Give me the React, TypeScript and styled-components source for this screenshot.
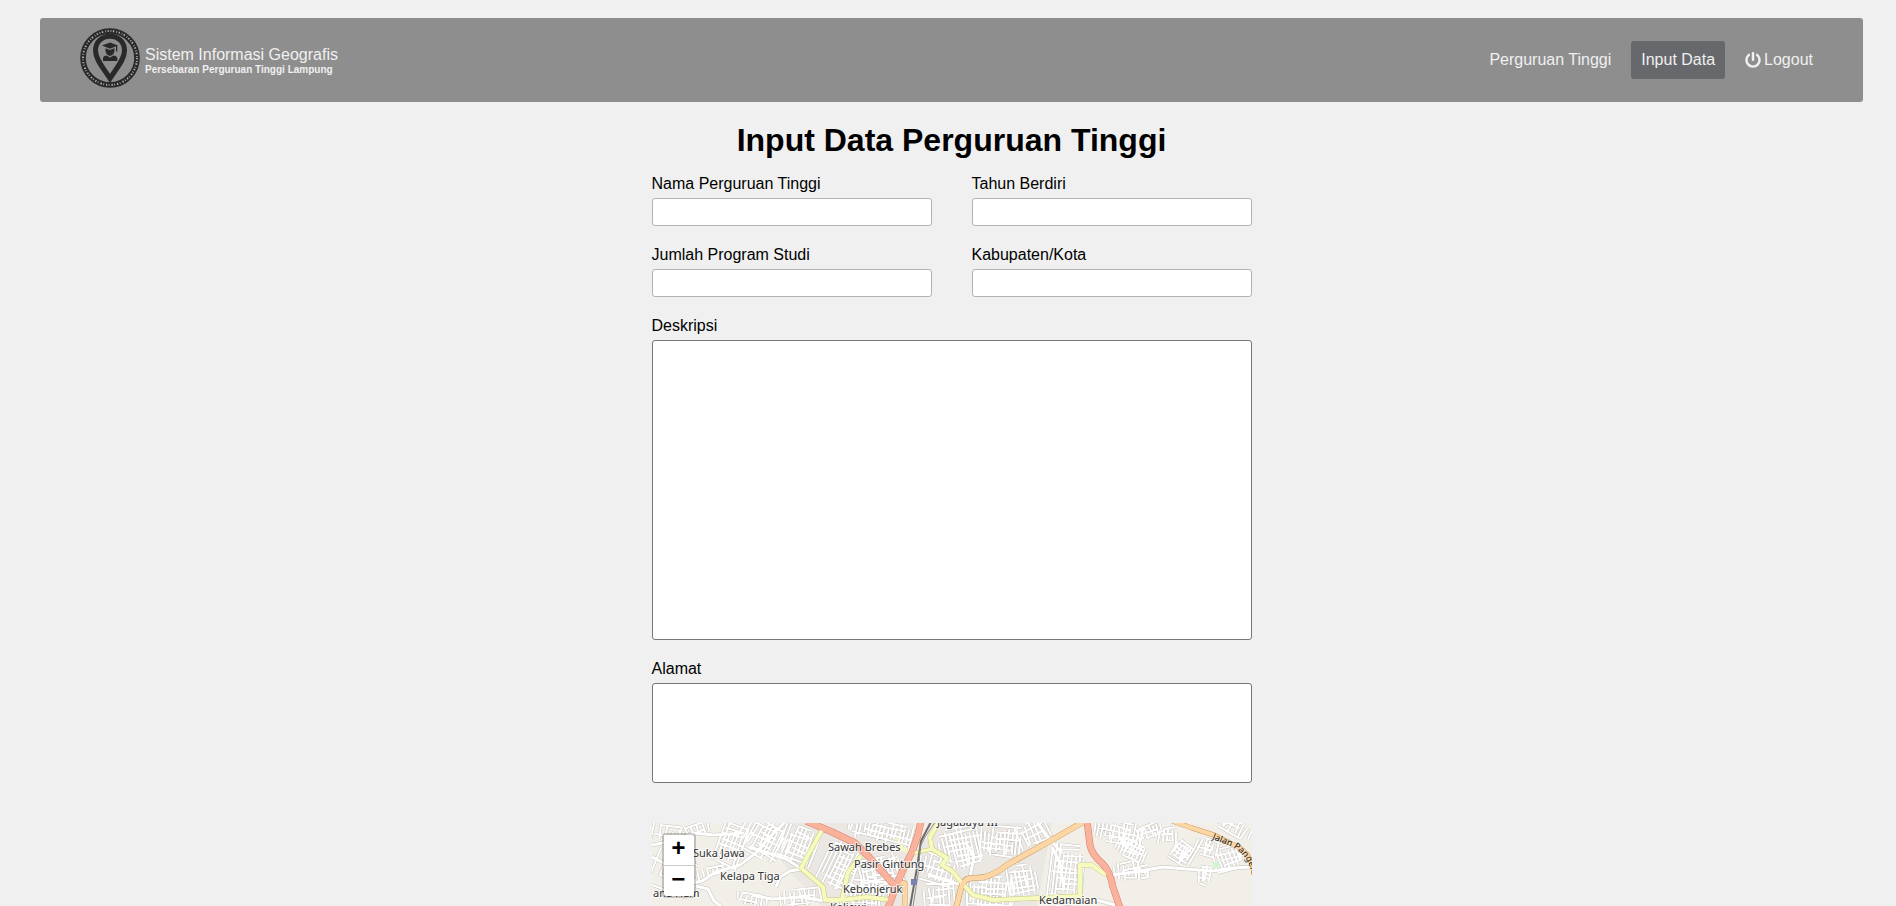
import React from 'react';
import styled, { createGlobalStyle } from 'styled-components';
import { FaPowerOff } from 'react-icons/fa';

const GlobalStyle = createGlobalStyle`
  *, *::before, *::after { box-sizing: border-box; }
  body {
    margin: 0;
    background: #f0f0f0;
    color: #000;
    font-family: Arial, 'Liberation Sans', sans-serif;
    font-size: 16px;
    line-height: 18px;
  }
`;

const Page = styled.div`
  display: flex;
  flex-direction: column;
  height: 100vh;
  padding: 18px 33px 0 40px;
  overflow: hidden;
`;

const Header = styled.header`
  display: flex;
  align-items: center;
  justify-content: space-between;
  flex: none;
  padding: 10px 40px;
  border-radius: 3px;
  background: #8e8e8e;
  color: #f0f0f0;
`;

const Brand = styled.a`
  display: flex;
  align-items: center;
  gap: 5px;
  padding-bottom: 4px;
  color: inherit;
  text-decoration: none;
`;

const BrandText = styled.span`
  display: flex;
  flex-direction: column;
  padding-top: 6px;
`;

const BrandName = styled.span`
  line-height: 18px;
`;

const BrandTagline = styled.strong`
  font-size: 10px;
  line-height: 12px;
`;

const Nav = styled.nav`
  display: flex;
  gap: 10px;
`;

const NavLink = styled.a<{ $active?: boolean }>`
  display: flex;
  align-items: center;
  gap: 3px;
  padding: 10px;
  border-radius: 3px;
  background: ${(p) => (p.$active ? '#67686c' : 'transparent')};
  color: inherit;
  text-decoration: none;
`;

const Main = styled.main`
  display: flex;
  flex: 1;
  flex-direction: column;
  align-items: center;
  padding-top: 20px;
`;

const Title = styled.h1`
  margin: 0 0 16px;
  font-size: 32px;
  line-height: 37px;
`;

const Form = styled.form`
  display: flex;
  flex: 1;
  flex-direction: column;
  gap: 20px;
  width: 100%;
  max-width: 600px;
`;

const FieldGrid = styled.div`
  display: grid;
  grid-template-columns: 1fr 1fr;
  gap: 20px 40px;
`;

const Field = styled.div`
  display: flex;
  flex-direction: column;
  gap: 5px;
`;

const TextInput = styled.input`
  width: 100%;
  height: 28px;
  padding: 5px;
  border: 1px solid #b2b2b2;
  border-radius: 3px;
  background: #fff;
  font: inherit;
`;

const TextArea = styled.textarea<{ $height: number }>`
  display: block;
  width: 100%;
  height: ${(p) => p.$height}px;
  padding: 5px;
  border: 1px solid #767676;
  border-radius: 3px;
  background: #fff;
  font: inherit;
  resize: none;
`;

const MapFrame = styled.div`
  position: relative;
  flex: 1;
  min-height: 80px;
  margin-top: 20px;
  overflow: hidden;
  background: #f2efe9;
`;

const MapDrawing = styled.svg`
  position: absolute;
  top: 0;
  left: 0;
  font-family: 'Noto Sans', sans-serif;
`;

const ZoomControl = styled.div`
  position: absolute;
  top: 10px;
  left: 10px;
  display: flex;
  flex-direction: column;
  border: 2px solid rgba(0, 0, 0, 0.2);
  border-radius: 4px;
  background-clip: padding-box;
`;

const ZoomButton = styled.button`
  width: 30px;
  height: 30px;
  padding: 0;
  border: 0;
  background: #fff;
  color: #000;
  font: bold 24px/30px 'Liberation Mono', monospace;
  cursor: pointer;

  &:first-child {
    height: 31px;
    border-bottom: 1px solid #ccc;
    border-radius: 2px 2px 0 0;
  }

  &:last-child {
    border-radius: 0 0 2px 2px;
  }
`;

function Logo() {
  return (
    <svg width="60" height="60" viewBox="0 0 60 60" aria-hidden="true">
      <circle cx="30" cy="30" r="27" fill="none" stroke="#292929" strokeWidth="5.6" />
      <circle
        cx="30"
        cy="30"
        r="27"
        fill="none"
        stroke="#b4b4b4"
        strokeWidth="2"
        strokeDasharray="1.2 1.9 0.8 1.5 1.4 2.2 0.7 1.6"
      />
      <path
        d="M30 8.200c-8.500 0-14.500 6.200-14.500 14.300 0 9.500 8.500 18 14.500 28 6-10 14.500-18.500 14.500-28C44.500 14.400 38.500 8.200 30 8.200Z"
        fill="none"
        stroke="#292929"
        strokeWidth="5"
      />
      <g fill="#292929">
        <path d="M30 14.500 38 17.600l-8 3.200-8-3.200Z" />
        <path d="M36 18h1.300v5.500H36Z" />
        <path d="M25.500 20.200l4.500 1.800 4.500-1.800v2c0 3-2 5.500-4.500 5.500s-4.500-2.500-4.500-5.500Z" />
        <path d="M23 33v-2.500c0-2 1.500-3 3.500-3l3.500 2 3.500-2c2 0 3.800 1 3.800 3V33Z" />
      </g>
    </svg>
  );
}

type District = {
  x: number;
  y: number;
  w: number;
  h: number;
  angle: number;
  step: number;
};

const districts: District[] = [
  { x: 0, y: 2, w: 34, h: 20, angle: 12, step: 7 },
  { x: 28, y: 0, w: 32, h: 14, angle: -20, step: 6 },
  { x: 0, y: 30, w: 44, h: 40, angle: 24, step: 9 },
  { x: 66, y: 0, w: 26, h: 46, angle: 20, step: 4 },
  { x: 90, y: -8, w: 44, h: 44, angle: 28, step: 4 },
  { x: 128, y: 2, w: 36, h: 40, angle: 22, step: 4 },
  { x: 46, y: 42, w: 28, h: 12, angle: -18, step: 5 },
  { x: 84, y: 70, w: 30, h: 14, angle: 15, step: 5 },
  { x: 128, y: 64, w: 40, h: 20, angle: -8, step: 5 },
  { x: 172, y: 16, w: 34, h: 52, angle: 24, step: 4 },
  { x: 196, y: -4, w: 64, h: 24, angle: 14, step: 4 },
  { x: 208, y: 32, w: 40, h: 32, angle: -14, step: 4 },
  { x: 192, y: 56, w: 44, h: 30, angle: 6, step: 4 },
  { x: 266, y: 30, w: 36, h: 30, angle: 18, step: 5 },
  { x: 272, y: 58, w: 32, h: 28, angle: -4, step: 5 },
  { x: 288, y: 2, w: 42, h: 44, angle: -12, step: 4 },
  { x: 328, y: 2, w: 42, h: 34, angle: 6, step: 4 },
  { x: 366, y: -4, w: 34, h: 28, angle: -24, step: 5 },
  { x: 314, y: 52, w: 48, h: 34, angle: 4, step: 4 },
  { x: 356, y: 40, w: 28, h: 36, angle: -8, step: 4 },
  { x: 398, y: 20, w: 34, h: 64, angle: 6, step: 4 },
  { x: 442, y: -4, w: 50, h: 26, angle: 12, step: 4 },
  { x: 464, y: 16, w: 30, h: 20, angle: 26, step: 3 },
  { x: 486, y: 0, w: 26, h: 16, angle: -20, step: 4 },
  { x: 462, y: 38, w: 26, h: 20, angle: -8, step: 5 },
  { x: 484, y: 42, w: 14, h: 16, angle: 0, step: 4 },
  { x: 508, y: 4, w: 16, h: 18, angle: 2, step: 4 },
  { x: 520, y: 18, w: 22, h: 24, angle: 34, step: 3 },
  { x: 544, y: 14, w: 22, h: 22, angle: 20, step: 4 },
  { x: 546, y: 42, w: 14, h: 20, angle: 8, step: 4 },
  { x: 562, y: 22, w: 30, h: 26, angle: -16, step: 4 },
  { x: 560, y: -6, w: 40, h: 16, angle: 30, step: 5 },
];

/* Small repeatable pseudo random generator, so that the streets stay put between renders. */
function createRandom(seed: number) {
  let state = seed;
  return () => {
    state = (state * 16807) % 2147483647;
    return state / 2147483647;
  };
}

function streetPath({ x, y, w, h, step }: District, seed: number) {
  const random = createRandom(seed * 7919 + 13);
  const parts: string[] = [];
  for (let dx = 0; dx <= w; dx += step) {
    const start = Math.round(random() * h * 0.3);
    const end = Math.round(h - random() * h * 0.3);
    parts.push(`M${x + dx} ${y + start}l${Math.round(random() * 4 - 2)} ${end - start}`);
  }
  for (let dy = 2; dy <= h; dy += step * 1.4) {
    const start = Math.round(random() * w * 0.4);
    const end = Math.round(w - random() * w * 0.3);
    parts.push(`M${x + start} ${y + dy}l${end - start} ${Math.round(random() * 4 - 2)}`);
  }
  return parts.join('');
}

const streets = districts.map((d, i) => ({
  d: streetPath(d, i + 1),
  transform: `rotate(${d.angle} ${d.x + d.w / 2} ${d.y + d.h / 2})`,
}));

const lanes = [
  'M36 61 50 58 64 49 88 42 104 30 116 16 134-2',
  'M96 24 116 30 134 36 150 46',
  'M44 63 56 66 62 78 70 84',
  'M0 34 12 40 30 46 44 58',
  'M0 22 20 18 42 10 62 12 92 10',
  'M100 72 120 76 150 74 172 78',
  'M276 52 296 58 310 62',
  'M314 20 322 34 318 54',
  'M384-2 396 14 410 30',
  'M460 52 482 49 511 44 534 46 561 48 580 45 600 44',
  'M400 24 408 40 412 66',
  'M440 76 456 80 470 84',
  'M124 64 128 54 138 48 150 46',
];

type Road = { d: string; width: number; fill: string; edge: string };

const yellow = { fill: '#f7fabf', edge: '#c5cb79' };
const orange = { fill: '#fcd6a4', edge: '#c99758' };
const red = { fill: '#f9b29c', edge: '#dd7c68' };

const roads: Road[] = [
  { ...yellow, width: 4, d: 'M170 7 149 45 171 64 173 77H190L196 49 209 33' },
  { ...yellow, width: 4, d: 'M190 77 215 74 238 77' },
  { ...yellow, width: 4, d: 'M287-1 278 14 280 26 295 35 290 42 300 48 310 60 321 72 341 77 385 75 428 73V42H440L454 52' },
  { ...yellow, width: 3, d: 'M280 26 262 30' },
  { ...orange, width: 4, d: 'M253 84V60H248' },
  { ...orange, width: 5, d: 'M433-2 398 18 355 42Q338 56 322 55 312 54 309 65L304 85' },
  { ...orange, width: 4, d: 'M520-2 540 5 562 12 580 21Q600 28 602 52' },
  { ...red, width: 6, d: 'M154-2 180 9 203 20 218 35 243 63' },
  { ...red, width: 6, d: 'M269-2 266 12 260 29 250 49 243 66 236 85' },
  { ...red, width: 6, d: 'M435-2 438 22Q440 32 450 40 458 48 461 64L468 85' },
];

const labels = [
  { x: 41, y: 34, text: 'Suka Jawa' },
  { x: 68, y: 57, text: 'Kelapa Tiga' },
  { x: 1, y: 74, text: 'ana Ham' },
  { x: 176, y: 28, text: 'Sawah Brebes' },
  { x: 202, y: 45, text: 'Pasir Gintung' },
  { x: 191, y: 70, text: 'Kebonjeruk' },
  { x: 178, y: 88, text: 'Kaliawi' },
  { x: 285, y: 3, text: 'Jagabaya III' },
  { x: 387, y: 81, text: 'Kedamaian' },
];

function CityMap() {
  return (
    <MapDrawing width="600" height="90" viewBox="0 0 600 90" role="img" aria-label="Peta Bandar Lampung">
      <rect width="600" height="90" fill="#f2efe9" />
      <path d="M128 0H262L250 90H176L130 40ZM268 22 290 0H400L384 90H262Z" fill="#ebe8e4" />
      <path d="M238 12 253 13 258 30 246 27Z" fill="#f7fabf" />
      <g fill="none" stroke="#c6c3be" strokeWidth="3">
        {streets.map((s, i) => <path key={i} {...s} />)}
        {lanes.map((d) => <path key={d} d={d} strokeWidth="4" />)}
      </g>
      <g fill="none" stroke="#fff" strokeWidth="2">
        {streets.map((s, i) => <path key={i} {...s} />)}
        {lanes.map((d) => <path key={d} d={d} strokeWidth="3" />)}
      </g>
      <g fill="none" strokeLinejoin="round">
        {roads.map((r) => <path key={r.d} d={r.d} stroke={r.edge} strokeWidth={r.width + 1} />)}
        {roads.map((r) => <path key={r.d} d={r.d} stroke={r.fill} strokeWidth={r.width} />)}
        <path d="M279-1 269 18 265 45 257 90" stroke="#6b6b6b" strokeWidth="2" />
        <path d="M283-1 273 14 268 24 267 45 260 90" stroke="#8a8a8a" />
      </g>
      <rect x="259" y="56" width="6" height="6" fill="#7981b0" />
      <path d="M561 40 566 39 567 44 562 45Z" fill="#c8facc" />
      <g fontSize="11" fill="#333" stroke="#fff" strokeOpacity="0.7" strokeWidth="2" paintOrder="stroke">
        {labels.map((l) => <text key={l.text} x={l.x} y={l.y}>{l.text}</text>)}
      </g>
      <path id="jalan" d="M560 16 578 23Q596 31 601 54" fill="none" />
      <text fontSize="9" fill="#222">
        <textPath href="#jalan">Jalan Pangeran</textPath>
      </text>
    </MapDrawing>
  );
}

const shortFields = [
  { id: 'nama', label: 'Nama Perguruan Tinggi' },
  { id: 'tahun', label: 'Tahun Berdiri' },
  { id: 'prodi', label: 'Jumlah Program Studi' },
  { id: 'kota', label: 'Kabupaten/Kota' },
];

const longFields = [
  { id: 'deskripsi', label: 'Deskripsi', height: 300 },
  { id: 'alamat', label: 'Alamat', height: 100 },
];

export default function App() {
  return (
    <>
      <GlobalStyle />
      <Page>
        <Header>
          <Brand href="#">
            <Logo />
            <BrandText>
              <BrandName>Sistem Informasi Geografis</BrandName>
              <BrandTagline>Persebaran Perguruan Tinggi Lampung</BrandTagline>
            </BrandText>
          </Brand>
          <Nav>
            <NavLink href="#perguruan-tinggi">Perguruan Tinggi</NavLink>
            <NavLink href="#input-data" $active>Input Data</NavLink>
            <NavLink href="#logout">
              <FaPowerOff size={16} />
              Logout
            </NavLink>
          </Nav>
        </Header>
        <Main>
          <Title>Input Data Perguruan Tinggi</Title>
          <Form>
            <FieldGrid>
              {shortFields.map((f) => (
                <Field key={f.id}>
                  <label htmlFor={f.id}>{f.label}</label>
                  <TextInput id={f.id} name={f.id} type="text" />
                </Field>
              ))}
            </FieldGrid>
            {longFields.map((f) => (
              <Field key={f.id}>
                <label htmlFor={f.id}>{f.label}</label>
                <TextArea id={f.id} name={f.id} $height={f.height} />
              </Field>
            ))}
            <MapFrame>
              <CityMap />
              <ZoomControl>
                <ZoomButton type="button" aria-label="Zoom in">+</ZoomButton>
                <ZoomButton type="button" aria-label="Zoom out">−</ZoomButton>
              </ZoomControl>
            </MapFrame>
          </Form>
        </Main>
      </Page>
    </>
  );
}
